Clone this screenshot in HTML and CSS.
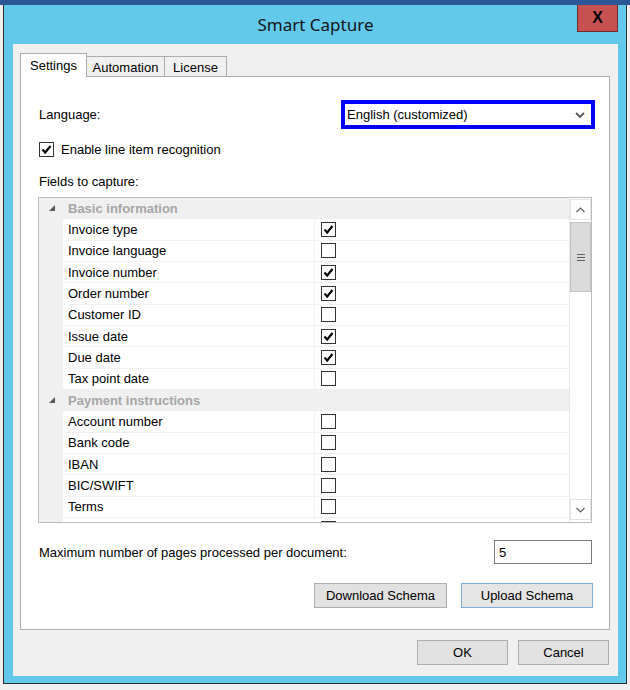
FILE: index.html
```html
<!DOCTYPE html>
<html>
<head>
<meta charset="utf-8">
<link rel="stylesheet" href="styles.css">
</head>
<body>
<div class="topband"></div>
<div class="window">
  <div class="titlebar">
    <div></div>
    <div class="title">Smart Capture</div>
    <div class="close">X</div>
  </div>
  <div class="content">
    <div class="tabs">
      <div class="tab active">Settings</div>
      <div class="tab tab-automation">Automation</div>
      <div class="tab tab-license">License</div>
    </div>
    <div class="panel">
      <div class="lang-row">
        <span>Language:</span>
        <div class="select">
          <span>English (customized)</span>
          <svg class="chev" width="10" height="6" viewBox="0 0 10 6"><polyline points="1,1 5,5 9,1" fill="none" stroke="#555" stroke-width="1.8"/></svg>
        </div>
      </div>
      <div class="check-row">
        <span class="cb"><svg width="13" height="13" viewBox="0 0 13 13"><polyline points="2.5,6.5 5.2,9.5 10.5,3" fill="none" stroke="#000" stroke-width="2.2"/></svg></span>
        <span>Enable line item recognition</span>
      </div>
      <div class="fields-label">Fields to capture:</div>
      <div class="grid">
        <div class="rows">
          <div class="row cat">
            <div class="gutter"><svg width="7" height="7" viewBox="0 0 7 7"><polygon points="6,0 6,6 0,6" fill="#595959"/></svg></div>
            <div class="cat-name">Basic information</div>
          </div>
          <div class="row item"><div class="gutter"></div><div class="name">Invoice type</div><div class="val"><span class="cb"><svg width="13" height="13" viewBox="0 0 13 13"><polyline points="2.5,6.5 5.2,9.5 10.5,3" fill="none" stroke="#000" stroke-width="2.2"/></svg></span></div></div>
          <div class="row item"><div class="gutter"></div><div class="name">Invoice language</div><div class="val"><span class="cb"></span></div></div>
          <div class="row item"><div class="gutter"></div><div class="name">Invoice number</div><div class="val"><span class="cb"><svg width="13" height="13" viewBox="0 0 13 13"><polyline points="2.5,6.5 5.2,9.5 10.5,3" fill="none" stroke="#000" stroke-width="2.2"/></svg></span></div></div>
          <div class="row item"><div class="gutter"></div><div class="name">Order number</div><div class="val"><span class="cb"><svg width="13" height="13" viewBox="0 0 13 13"><polyline points="2.5,6.5 5.2,9.5 10.5,3" fill="none" stroke="#000" stroke-width="2.2"/></svg></span></div></div>
          <div class="row item"><div class="gutter"></div><div class="name">Customer ID</div><div class="val"><span class="cb"></span></div></div>
          <div class="row item"><div class="gutter"></div><div class="name">Issue date</div><div class="val"><span class="cb"><svg width="13" height="13" viewBox="0 0 13 13"><polyline points="2.5,6.5 5.2,9.5 10.5,3" fill="none" stroke="#000" stroke-width="2.2"/></svg></span></div></div>
          <div class="row item"><div class="gutter"></div><div class="name">Due date</div><div class="val"><span class="cb"><svg width="13" height="13" viewBox="0 0 13 13"><polyline points="2.5,6.5 5.2,9.5 10.5,3" fill="none" stroke="#000" stroke-width="2.2"/></svg></span></div></div>
          <div class="row item"><div class="gutter"></div><div class="name">Tax point date</div><div class="val"><span class="cb"></span></div></div>
          <div class="row cat">
            <div class="gutter"><svg width="7" height="7" viewBox="0 0 7 7"><polygon points="6,0 6,6 0,6" fill="#595959"/></svg></div>
            <div class="cat-name">Payment instructions</div>
          </div>
          <div class="row item"><div class="gutter"></div><div class="name">Account number</div><div class="val"><span class="cb"></span></div></div>
          <div class="row item"><div class="gutter"></div><div class="name">Bank code</div><div class="val"><span class="cb"></span></div></div>
          <div class="row item"><div class="gutter"></div><div class="name">IBAN</div><div class="val"><span class="cb"></span></div></div>
          <div class="row item"><div class="gutter"></div><div class="name">BIC/SWIFT</div><div class="val"><span class="cb"></span></div></div>
          <div class="row item"><div class="gutter"></div><div class="name">Terms</div><div class="val"><span class="cb"></span></div></div>
          <div class="row item"><div class="gutter"></div><div class="name"></div><div class="val"><span class="cb"></span></div></div>
        </div>
        <div class="scrollbar">
          <div class="sb-btn"><svg width="9" height="6" viewBox="0 0 9 6"><polyline points="0.5,5 4.5,1 8.5,5" fill="none" stroke="#606060" stroke-width="1.2"/></svg></div>
          <div class="sb-thumb"><span class="grip"></span><span class="grip"></span><span class="grip"></span></div>
          <div class="sb-track"></div>
          <div class="sb-btn sb-down"><svg width="9" height="6" viewBox="0 0 9 6"><polyline points="0.5,1 4.5,5 8.5,1" fill="none" stroke="#606060" stroke-width="1.2"/></svg></div>
        </div>
      </div>
      <div class="max-row">
        <span>Maximum number of pages processed per document:</span>
        <div class="num-input">5</div>
      </div>
      <div class="schema-row">
        <div class="btn btn-download">Download Schema</div>
        <div class="btn btn-upload">Upload Schema</div>
      </div>
    </div>
    <div class="footer">
      <div class="btn btn-dialog">OK</div>
      <div class="btn btn-dialog">Cancel</div>
    </div>
  </div>
</div>
</body>
</html>
```
FILE: styles.css
```css
* { box-sizing: border-box; }
html, body {
  margin: 0;
  padding: 0;
}
body {
  width: 630px;
  height: 690px;
  overflow: hidden;
  background: #f0f0f0;
  font-family: "Liberation Sans", Arial, sans-serif;
  font-size: 13px;
  color: #000;
}
.topband {
  height: 5px;
  background: #2b5797;
}
.window {
  margin-left: 3px;
  width: 624px;
  height: 679px;
  background: #63c9eb;
  border: 1px solid #2d2d30;
  border-top: none;
  padding: 0 8px 7px 9px;
}
.titlebar {
  height: 39px;
  display: grid;
  grid-template-columns: 1fr auto 1fr;
  align-items: start;
}
.title {
  font-family: "Noto Sans", "Open Sans", sans-serif;
  font-size: 17px;
  line-height: 40px;
  color: #141414;
  text-align: center;
}
.close {
  justify-self: end;
  width: 41px;
  height: 27px;
  background: #c75050;
  border: 1px solid #6e2a2a;
  border-top: none;
  color: #000;
  font-family: "Liberation Sans", Arial, sans-serif;
  font-weight: bold;
  font-size: 16px;
  display: flex;
  align-items: center;
  justify-content: center;
}
.content {
  height: 632px;
  background: #f0f0f0;
  padding-top: 9px;
}
.tabs {
  height: 23px;
  display: flex;
  align-items: flex-end;
  padding-left: 7px;
}
.tab {
  height: 20px;
  border: 1px solid #acacac;
  border-bottom: none;
  background: #f0f0f0;
  display: flex;
  align-items: center;
  justify-content: center;
  padding-top: 1px;
}
.tab.active {
  position: relative;
  z-index: 1;
  height: 24px;
  margin-bottom: -1px;
  width: 67px;
  background: #fff;
  padding-top: 0;
  padding-bottom: 1px;
}
.tab-automation { width: 78px; border-left: none; }
.tab-license { width: 62px; border-left: none; }
.panel {
  margin-left: 7px;
  width: 590px;
  height: 554px;
  background: #fff;
  border: 1px solid #acacac;
  padding: 23px 17px 0 18px;
}
.lang-row {
  height: 29px;
  display: flex;
  align-items: center;
  justify-content: space-between;
  margin-right: -3px;
}
.select {
  width: 254px;
  height: 29px;
  border: 4px solid #0000ff;
  background: #fff;
  display: flex;
  align-items: center;
  justify-content: space-between;
  padding: 0 6px 0 2px;
}
.chev { display: block; }
.check-row {
  margin-top: 13px;
  height: 15px;
  display: flex;
  align-items: center;
  gap: 7px;
}
.cb {
  width: 15px;
  height: 15px;
  border: 1px solid #333;
  background: #fff;
  display: flex;
  align-items: center;
  justify-content: center;
  flex: none;
}
.cb svg { display: block; }
.fields-label {
  margin-top: 17px;
  line-height: 16px;
  height: 16px;
}
.grid {
  margin-top: 7px;
  margin-left: -1px;
  width: 554px;
  height: 326px;
  border: 1px solid #bcbcbc;
  display: flex;
  overflow: hidden;
}
.rows {
  width: 530px;
  flex: none;
  overflow: hidden;
}
.row {
  height: 21.333px;
  display: grid;
  grid-template-columns: 24px 252px 1fr;
}
.row.cat {
  background: #f0f0f0;
}
.gutter {
  background: #f0f0f0;
  display: flex;
  align-items: center;
  justify-content: center;
  padding-left: 2px;
}
.gutter svg { display: block; }
.cat-name {
  grid-column: 2 / 4;
  font-weight: bold;
  color: #a6a6a6;
  padding-left: 5px;
  display: flex;
  align-items: center;
}
.name {
  background: #fff;
  border-bottom: 1px solid #f0f0f0;
  border-right: 1px solid #f0f0f0;
  padding-left: 5px;
  display: flex;
  align-items: center;
}
.val {
  background: #fff;
  border-bottom: 1px solid #f0f0f0;
  padding-left: 6px;
  display: flex;
  align-items: center;
}
.scrollbar {
  width: 22px;
  flex: none;
  background: #fff;
  border-left: 1px solid #e8e8e8;
  display: flex;
  flex-direction: column;
  padding: 1px 0 2px 0;
}
.sb-btn {
  height: 21px;
  border: 1px solid #e3e3e3;
  display: flex;
  align-items: center;
  justify-content: center;
}
.sb-btn svg { display: block; }
.sb-thumb {
  margin-top: 2px;
  height: 70px;
  background: #dadada;
  border: 1px solid #c4c4c4;
  display: flex;
  flex-direction: column;
  align-items: center;
  justify-content: center;
  gap: 2px;
}
.grip {
  width: 8px;
  height: 1px;
  background: #606060;
}
.sb-track { flex: 1; }
.max-row {
  margin-top: 17px;
  height: 24px;
  display: flex;
  align-items: center;
  justify-content: space-between;
}
.num-input {
  width: 98px;
  height: 24px;
  border: 1px solid #7a7a7a;
  padding-left: 4px;
  display: flex;
  align-items: center;
  background: #fff;
}
.schema-row {
  margin-top: 19px;
  height: 25px;
  display: flex;
  justify-content: flex-end;
  gap: 14px;
  margin-right: -1px;
}
.btn {
  height: 25px;
  background: #e1e1e1;
  border: 1px solid #adadad;
  display: flex;
  align-items: center;
  justify-content: center;
}
.btn-download { width: 133px; }
.btn-upload { width: 132px; border-color: #7eaedf; background: #e5e5e5; }
.footer {
  margin-top: 10px;
  display: flex;
  justify-content: flex-end;
  gap: 10px;
  padding-right: 9px;
}
.btn-dialog { width: 91px; }
```
